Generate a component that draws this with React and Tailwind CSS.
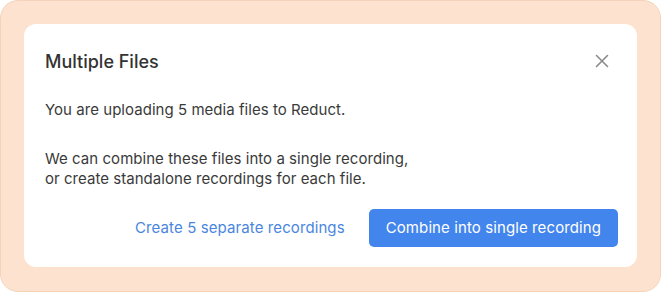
import React from "react";

export default function App() {
  return (
    <div className="w-[661px] h-[292px] bg-white" style={{ fontFamily: "Inter, 'Noto Sans', sans-serif" }}>
      <div className="w-full h-full rounded-[18px] bg-[#fde3cf] border border-[#f3d3ba] pt-[23px] pl-[23px] pr-[23px]">
        <div className="w-[613px] h-[243px] bg-white rounded-[12px] pl-[21px] pr-[19px] pt-[25px] flex flex-col">
          <div className="flex items-center justify-between h-[24px]">
            <h2 className="text-[18px] font-medium text-[#333333]">Multiple Files</h2>
            <button className="w-[24px] h-[24px] mr-[4px] flex items-center justify-center text-[#8a8a8a]">
              <svg width="14" height="14" viewBox="0 0 14 14" fill="none" stroke="currentColor" strokeWidth="1.6" strokeLinecap="round">
                <path d="M1.5 1.5 L12.5 12.5 M12.5 1.5 L1.5 12.5" />
              </svg>
            </button>
          </div>
          <p className="mt-[27px] text-[15px] leading-[20px] tracking-[0.04px] text-[#3a3a3a]">You are uploading 5 media files to Reduct.</p>
          <p className="mt-[29px] text-[15px] leading-[20px] tracking-[0.04px] text-[#3a3a3a]">
            We can combine these files into a single recording,
            <br />
            or create standalone recordings for each file.
          </p>
          <div className="mt-[20px] flex items-center justify-end gap-[24px]">
            <button className="text-[15px] tracking-[0.1px] text-[#4a86e0]">Create 5 separate recordings</button>
            <button className="h-[38px] px-[17px] rounded-[5px] bg-[#4285ec] text-white text-[15px] tracking-[0.1px]">Combine into single recording</button>
          </div>
        </div>
      </div>
    </div>
  );
}
